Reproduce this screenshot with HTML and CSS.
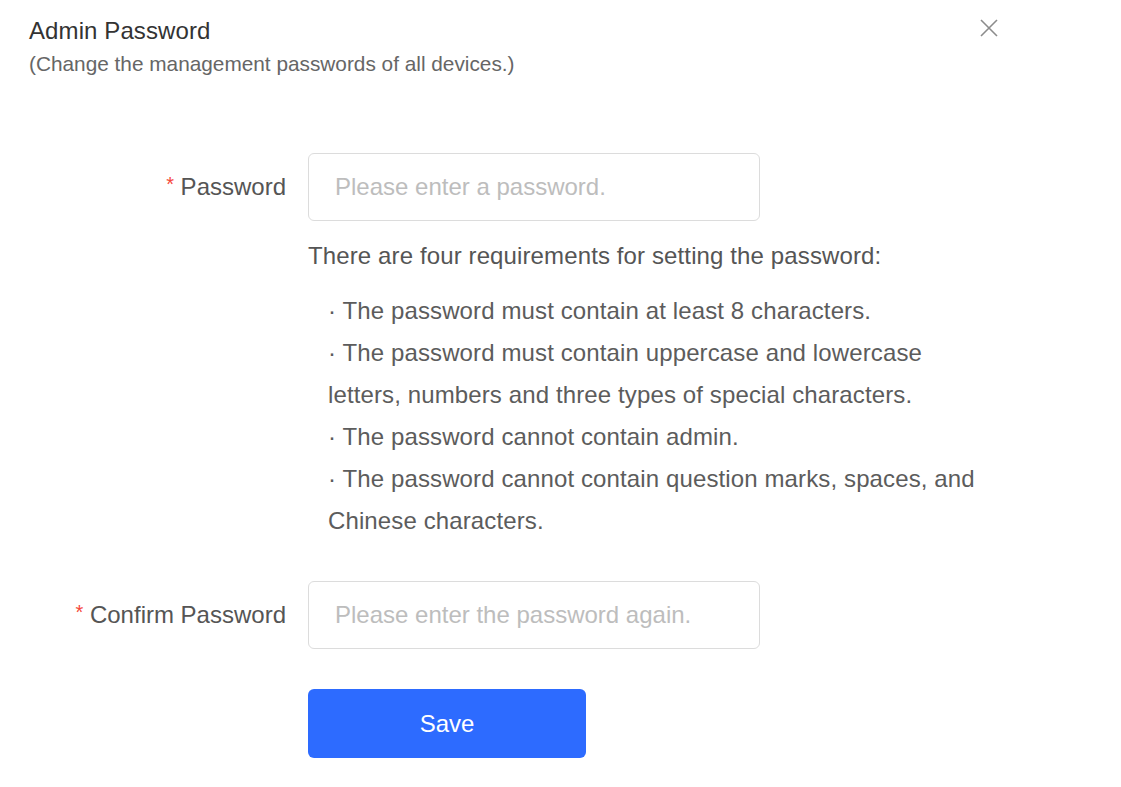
FILE: index.html
```html
<!DOCTYPE html>
<html lang="en">
<head>
  <meta charset="UTF-8">
  <meta name="viewport" content="width=device-width, initial-scale=1.0">
  <title>Admin Password</title>
  <link rel="stylesheet" href="styles.css">
</head>
<body>
  <div class="dialog">
    <div class="dialog-header">
      <div class="heading">
        <h1>Admin Password</h1>
        <p class="subtitle">(Change the management passwords of all devices.)</p>
      </div>
      <button class="close-btn" aria-label="Close">
        <svg width="20" height="20" viewBox="0 0 20 20">
          <path d="M2 2 L18 18 M18 2 L2 18" stroke="#8c8c8c" stroke-width="1.6" fill="none"/>
        </svg>
      </button>
    </div>

    <div class="form">
      <div class="form-row">
        <label for="password"><span class="required">*</span> Password</label>
        <input type="password" id="password" placeholder="Please enter a password.">
      </div>
      <div class="form-help">
        <p class="help-title">There are four requirements for setting the password:</p>
        <ul class="rules">
          <li>· The password must contain at least 8 characters.</li>
          <li>· The password must contain uppercase and lowercase letters, numbers and three types of special characters.</li>
          <li>· The password cannot contain admin.</li>
          <li>· The password cannot contain question marks, spaces, and Chinese characters.</li>
        </ul>
      </div>
      <div class="form-row confirm-row">
        <label for="confirm"><span class="required">*</span> Confirm Password</label>
        <input type="password" id="confirm" placeholder="Please enter the password again.">
      </div>
      <div class="form-actions">
        <button class="save-btn">Save</button>
      </div>
    </div>
  </div>
</body>
</html>
```

FILE: styles.css
```css
body {
  margin: 0;
  padding: 0;
  background: #fff;
  font-family: "Liberation Sans", Arial, sans-serif;
  color: #555;
}
.dialog {
  padding: 13px 0 0 29px;
}
.dialog-header {
  display: flex;
  justify-content: space-between;
  align-items: flex-start;
  width: 970px;
}
.dialog-header h1 {
  margin: 0;
  font-size: 24px;
  font-weight: normal;
  line-height: 36px;
  color: #333;
  letter-spacing: 0.1px;
}
.subtitle {
  margin: 0;
  font-size: 20.8px;
  line-height: 30px;
  color: #666;
}
.close-btn {
  margin-top: 5px;
  padding: 0;
  border: none;
  background: none;
  width: 20px;
  height: 20px;
  cursor: pointer;
}
.form {
  margin-top: 74px;
}
.form-row {
  display: flex;
  align-items: center;
}
.form-row label {
  width: 279px;
  box-sizing: border-box;
  padding-right: 22px;
  text-align: right;
  font-size: 24px;
  color: #555;
}
.required {
  color: #f5473b;
  font-size: 20px;
  vertical-align: 4px;
}
.form-row input {
  width: 452px;
  height: 68px;
  box-sizing: border-box;
  padding: 0 26px;
  border: 1px solid #dcdcdc;
  border-radius: 6px;
  font-family: inherit;
  font-size: 24px;
  color: #333;
  outline: none;
}
.form-row input::placeholder {
  color: #bdbdbd;
}
.form-help {
  margin-left: 279px;
  font-size: 24px;
  line-height: 42px;
  color: #555;
  letter-spacing: 0.12px;
}
.help-title {
  margin: 14px 0 0;
}
.rules {
  list-style: none;
  margin: 13px 0 0;
  padding: 0 0 0 20px;
  width: 660px;
  color: #5c5c5c;
}
.confirm-row {
  margin-top: 39px;
}
.form-actions {
  margin: 40px 0 0 279px;
}
.save-btn {
  width: 278px;
  height: 69px;
  border: none;
  border-radius: 6px;
  background: #2d6bff;
  color: #fff;
  font-family: inherit;
  font-size: 24px;
  cursor: pointer;
}
```
